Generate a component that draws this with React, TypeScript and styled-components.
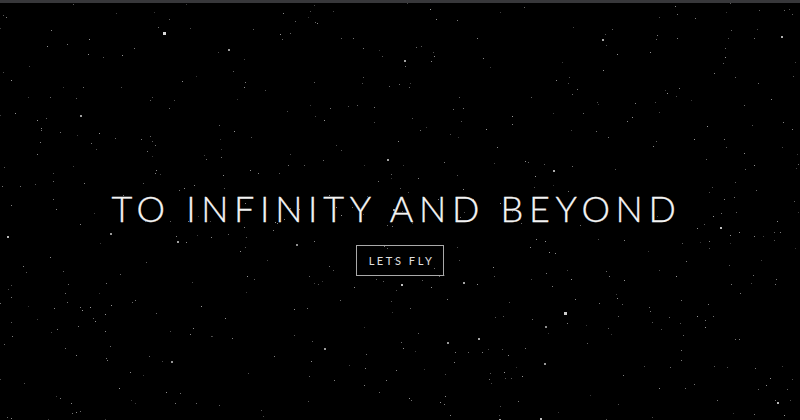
import React, { useMemo } from "react";
import styled, { createGlobalStyle } from "styled-components";

const Global = createGlobalStyle`
  html, body { margin: 0; padding: 0; background: #000; }
  body { font-family: "Lato", "Liberation Sans", sans-serif; overflow: hidden; }
`;

const Page = styled.div`
  position: relative;
  width: 800px;
  height: 420px;
  background: #000;
  display: flex;
  flex-direction: column;
  overflow: hidden;
`;

const TopBar = styled.div`
  height: 3px;
  background: #37373a;
  flex: none;
`;

const Sky = styled.svg`
  position: absolute;
  left: 0;
  top: 3px;
  width: 800px;
  height: 417px;
`;

const Hero = styled.main`
  position: relative;
  flex: 1;
  display: flex;
  flex-direction: column;
  align-items: center;
  padding-top: 183px;
`;

const Title = styled.h1`
  margin: 0;
  padding-right: 7px;
  font-family: "Lato", "Liberation Sans", sans-serif;
  font-weight: 300;
  font-size: 36px;
  line-height: 44px;
  letter-spacing: 5.7px;
  color: #f4f4f4;
  white-space: nowrap;
  -webkit-text-stroke: 0.3px #f4f4f4;
`;

const FlyButton = styled.button`
  margin-top: 15px;
  height: 31px;
  padding: 0 9px 0 12px;
  background: transparent;
  border: 1px solid #a9a9a9;
  color: #e0e0e0;
  font-family: "Lato", "Liberation Sans", sans-serif;
  font-size: 11px;
  letter-spacing: 2.6px;
  cursor: pointer;
`;

function rng(seed: number) {
  let s = seed;
  return () => {
    s = (s * 1664525 + 1013904223) % 4294967296;
    return s / 4294967296;
  };
}

export default function App() {
  const stars = useMemo(() => {
    const r = rng(11);
    const out: { x: number; y: number; s: number; o: number }[] = [];
    for (let i = 0; i < 600; i++) {
      const big = r() < 0.04;
      out.push({
        x: Math.floor(r() * 800),
        y: Math.floor(r() * 417),
        s: big ? 2 : 1,
        o: big ? 0.55 + r() * 0.2 : 0.2 + r() * 0.4,
      });
    }
    out.push({ x: 564, y: 309, s: 3, o: 0.8 });
    out.push({ x: 163, y: 29, s: 3, o: 0.85 });
    return out;
  }, []);

  return (
    <>
      <Global />
      <Page>
        <TopBar />
        <Sky viewBox="0 0 800 417">
          {stars.map((st, i) => (
            <rect key={i} x={st.x} y={st.y} width={st.s} height={st.s} fill="#fff" opacity={st.o} />
          ))}
        </Sky>
        <Hero>
          <Title>TO INFINITY AND BEYOND</Title>
          <FlyButton>LETS FLY</FlyButton>
        </Hero>
      </Page>
    </>
  );
}
